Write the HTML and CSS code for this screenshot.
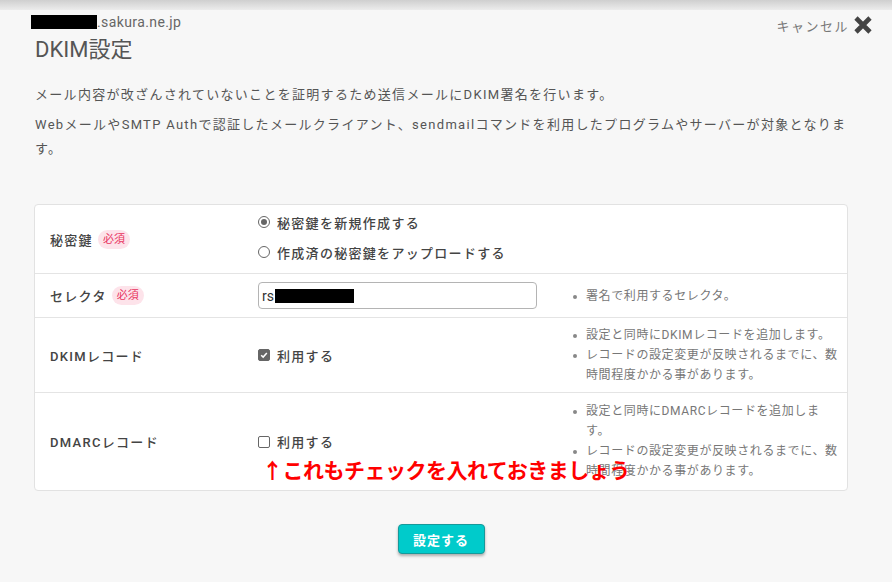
FILE: index.html
```html
<!DOCTYPE html>
<html lang="ja">
<head>
<meta charset="utf-8">
<title>DKIM設定</title>
<link rel="stylesheet" href="styles.css">
</head>
<body>
<div class="topbar"></div>
<div class="page">
  <header class="header">
    <div class="head-left">
      <div class="domain"><span class="mask mask-domain"></span>.sakura.ne.jp</div>
      <h1 class="title">DKIM設定</h1>
    </div>
    <div class="cancel">キャンセル
      <svg class="x-icon" width="20" height="20" viewBox="0 0 20 20"><path d="M3 3 L17 17 M17 3 L3 17" stroke="#444" stroke-width="4.6" stroke-linecap="butt"/></svg>
    </div>
  </header>

  <p class="desc">メール内容が改ざんされていないことを証明するため送信メールにDKIM署名を行います。</p>
  <p class="desc desc2">WebメールやSMTP Authで認証したメールクライアント、sendmailコマンドを利用したプログラムやサーバーが対象となります。</p>

  <div class="card">
    <div class="row row-key">
      <div class="label">秘密鍵<span class="badge">必須</span></div>
      <div class="field field-radio">
        <label class="opt"><span class="radio checked"></span>秘密鍵を新規作成する</label>
        <label class="opt"><span class="radio"></span>作成済の秘密鍵をアップロードする</label>
      </div>
      <div class="notes"></div>
    </div>
    <div class="row">
      <div class="label">セレクタ<span class="badge">必須</span></div>
      <div class="field">
        <div class="input">rs<span class="mask mask-input"></span></div>
      </div>
      <ul class="notes">
        <li>署名で利用するセレクタ。</li>
      </ul>
    </div>
    <div class="row">
      <div class="label">DKIMレコード</div>
      <div class="field">
        <label class="opt"><span class="check checked"><svg width="12" height="12" viewBox="0 0 12 12"><path d="M2.6 6.2 L5 8.5 L9.4 3.6" fill="none" stroke="#fff" stroke-width="1.8"/></svg></span>利用する</label>
      </div>
      <ul class="notes">
        <li>設定と同時にDKIMレコードを追加します。</li>
        <li>レコードの設定変更が反映されるまでに、数時間程度かかる事があります。</li>
      </ul>
    </div>
    <div class="row row-last">
      <div class="label">DMARCレコード</div>
      <div class="field">
        <label class="opt"><span class="check"></span>利用する</label>
      </div>
      <ul class="notes notes-last">
        <li>設定と同時にDMARCレコードを追加します。</li>
        <li>レコードの設定変更が反映されるまでに、数時間程度かかる事があります。</li>
      </ul>
      <div class="annotation">↑これもチェックを入れておきましょう</div>
    </div>
  </div>

  <div class="actions">
    <button class="submit">設定する</button>
  </div>
</div>
</body>
</html>
```

FILE: styles.css
```css
* { box-sizing: border-box; }
html, body { margin: 0; padding: 0; }
body {
  background: #f7f7f7;
  font-family: "Roboto", "Noto Sans CJK JP", sans-serif;
  color: #555;
  width: 892px;
  height: 582px;
  overflow: hidden;
}
.topbar {
  height: 10px;
  background: linear-gradient(#cfcfcf, #ececec);
}
.page {
  padding: 0 44px 0 34px;
}
.header {
  display: flex;
  justify-content: space-between;
  align-items: flex-start;
  margin-right: -25px;
}
.head-left { padding-top: 3px; }
.domain {
  font-size: 14px;
  line-height: 18px;
  color: #666;
  letter-spacing: 0.4px;
  display: flex;
  align-items: center;
  margin-left: -3px;
}
.mask { display: inline-block; background: #000; }
.mask-domain { width: 66px; height: 14px; }
.title {
  margin: 5px 0 0 1px;
  font-size: 22px;
  line-height: 28px;
  font-weight: 400;
  color: #555;
}
.cancel {
  display: flex;
  align-items: center;
  gap: 4px;
  padding-top: 5px;
  font-size: 13px;
  color: #777;
  letter-spacing: 1.5px;
}
.x-icon { display: block; }
.desc {
  margin: 19px 0 0 1px;
  font-size: 13px;
  line-height: 24px;
  letter-spacing: 1.3px;
  color: #555;
}
.desc2 { margin-top: 6px; }

.card {
  margin-top: 43px;
  background: #fff;
  border: 1px solid #e2e2e2;
  border-radius: 4px;
  width: 814px;
}
.row {
  display: grid;
  grid-template-columns: 223px 298px 1fr;
  align-items: center;
  border-bottom: 1px solid #e4e4e4;
  position: relative;
}
.row-last { border-bottom: none; }
.label {
  padding-left: 15px;
  font-size: 13px;
  font-weight: 500;
  color: #444;
  letter-spacing: 1.3px;
  display: flex;
  align-items: center;
}
.badge {
  display: inline-block;
  margin-left: 5px;
  padding: 0 5px;
  height: 19px;
  line-height: 19px;
  border-radius: 10px;
  background: #fde3ea;
  color: #e8335f;
  font-size: 11px;
  font-weight: 400;
  letter-spacing: 0;
}
.field {
  padding: 8px 0;
  display: flex;
  flex-direction: column;
  gap: 8px;
}
.field-radio { padding: 6px 0 10px; }
.opt {
  display: flex;
  align-items: center;
  height: 22px;
  font-size: 13px;
  font-weight: 500;
  color: #444;
  letter-spacing: 1.3px;
}
.radio {
  width: 12px;
  height: 12px;
  border: 1px solid #666;
  border-radius: 50%;
  margin-right: 7px;
  display: flex;
  align-items: center;
  justify-content: center;
}
.radio.checked::after {
  content: "";
  width: 6px;
  height: 6px;
  border-radius: 50%;
  background: #666;
}
.check {
  width: 12px;
  height: 12px;
  border: 1px solid #666;
  border-radius: 2px;
  margin-right: 7px;
  display: flex;
  align-items: center;
  justify-content: center;
}
.check.checked {
  background: #666;
  border-color: #666;
}
.check svg { display: block; }
.input {
  width: 279px;
  height: 27px;
  border: 1px solid #b4b4b4;
  border-radius: 4px;
  font-size: 14px;
  color: #333;
  padding-left: 3px;
  display: flex;
  align-items: center;
}
.mask-input { width: 79px; height: 14px; margin-left: 1px; }
.notes {
  margin: 0;
  padding: 7px 8px 7px 30px;
  list-style: none;
  font-size: 12px;
  line-height: 20px;
  color: #777;
  letter-spacing: 0.6px;
}
.notes-last { padding-top: 8px; padding-bottom: 9px; }
.notes li { position: relative; }
.notes li::before {
  content: "";
  position: absolute;
  left: -13px;
  top: 9px;
  width: 4px;
  height: 4px;
  border-radius: 50%;
  background: #888;
}
.annotation {
  position: absolute;
  left: 227px;
  top: 63px;
  font-size: 21px;
  line-height: 30px;
  font-weight: 700;
  color: #ff0000;
  letter-spacing: -0.5px;
  white-space: nowrap;
}
.actions {
  display: flex;
  justify-content: center;
  margin-top: 33px;
}
.submit {
  width: 87px;
  height: 30px;
  border: 1px solid #17999a;
  border-radius: 4px;
  background: #00cbcb;
  color: #fff;
  font-family: "Noto Sans CJK JP", sans-serif;
  font-size: 13px;
  font-weight: 700;
  letter-spacing: 1px;
  box-shadow: 0 2px 3px rgba(0,0,0,0.3);
  padding: 0;
}
```
